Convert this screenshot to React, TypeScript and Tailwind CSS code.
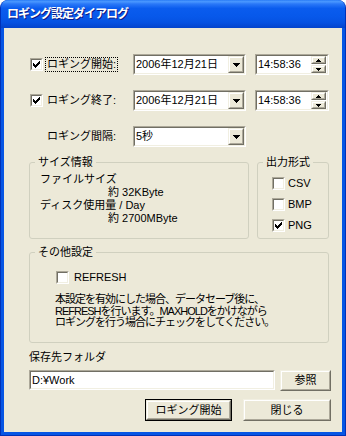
import React from "react";

type Run = [number, number, number];

function Px({ runs, w, h }: { runs: Run[]; w: number; h: number }) {
  return (
    <svg width={w} height={h} viewBox={`0 0 ${w} ${h}`} shapeRendering="crispEdges" className="block">
      {runs.map(([x, y, l], i) => (
        <rect key={i} x={x} y={y} width={l} height={1} fill="#000" />
      ))}
    </svg>
  );
}

const CHECK: Run[] = [
  [6, 0, 1],
  [5, 1, 2],
  [0, 2, 1],
  [4, 2, 3],
  [0, 3, 2],
  [3, 3, 3],
  [0, 4, 5],
  [1, 5, 3],
  [2, 6, 1],
];
const DOWN: Run[] = [
  [0, 0, 7],
  [1, 1, 5],
  [2, 2, 3],
  [3, 3, 1],
];
const SUP: Run[] = [
  [2, 0, 1],
  [1, 1, 3],
  [0, 2, 5],
];
const SDOWN: Run[] = [
  [0, 0, 5],
  [1, 1, 3],
  [2, 2, 1],
];

function Sunken({ className = "", children }: { className?: string; children?: React.ReactNode }) {
  return (
    <div className={`shrink-0 border border-t-[#ACA899] border-l-[#ACA899] border-b-white border-r-white ${className}`}>
      <div className="w-full h-full border border-t-[#716F64] border-l-[#716F64] border-b-[#F1EFE2] border-r-[#F1EFE2] bg-white flex items-center">
        {children}
      </div>
    </div>
  );
}

function Raised({ className = "", children }: { className?: string; children?: React.ReactNode }) {
  return (
    <div className={`shrink-0 border border-t-[#F1EFE2] border-l-[#F1EFE2] border-b-[#716F64] border-r-[#716F64] bg-[#ECE9D8] ${className}`}>
      <div className="w-full h-full border border-t-white border-l-white border-b-[#ACA899] border-r-[#ACA899] flex items-center justify-center">
        {children}
      </div>
    </div>
  );
}

function Check({ checked = false, className = "" }: { checked?: boolean; className?: string }) {
  return (
    <div className={`w-[13px] h-[13px] shrink-0 border border-t-[#ACA899] border-l-[#ACA899] border-b-white border-r-white ${className}`}>
      <div className="w-full h-full border border-t-[#716F64] border-l-[#716F64] border-b-[#F1EFE2] border-r-[#F1EFE2] bg-white flex items-center justify-center">
        {checked && <Px runs={CHECK} w={7} h={7} />}
      </div>
    </div>
  );
}

function Combo({ text }: { text: string }) {
  return (
    <Sunken className="w-[113px] h-[21px]">
      <span className="flex-1 pl-[1px] leading-[13px] whitespace-nowrap">{text}</span>
      <Raised className="w-[16px] h-[17px]">
        <Px runs={DOWN} w={7} h={4} />
      </Raised>
    </Sunken>
  );
}

function TimeBox() {
  return (
    <Sunken className="w-[74px] h-[21px] ml-[9px]">
      <span className="flex-1 pl-[1px] leading-[13px]">14:58:36</span>
      <div className="flex flex-col gap-[1px] pr-[1px]">
        <Raised className="w-[15px] h-[8px]">
          <Px runs={SUP} w={5} h={3} />
        </Raised>
        <Raised className="w-[15px] h-[8px]">
          <Px runs={SDOWN} w={5} h={3} />
        </Raised>
      </div>
    </Sunken>
  );
}

export default function App() {
  return (
    <div className="w-[346px] h-[436px] bg-white font-['Liberation_Sans','Noto_Sans_CJK_JP',sans-serif] text-[11px] text-black">
      <div className="w-full h-full flex flex-col rounded-t-[8px] overflow-hidden border-x border-b border-[#0031B8] bg-[#0655E4]">
        {/* title bar */}
        <div className="h-[28px] shrink-0 flex items-center pl-[6px] bg-[linear-gradient(to_bottom,#2a7cf6_0%,#4a98ff_6%,#2a78f8_14%,#0a5cee_30%,#0758ea_60%,#0652e2_80%,#0444cc_100%)]">
          <span className="text-white font-bold text-[12px] tracking-[-1px] leading-[14px] [text-shadow:1px_1px_#0A1883]">
            ロギング設定ダイアログ
          </span>
        </div>
        {/* frame */}
        <div className="flex-1 px-[3px] pb-[3px] flex">
          <div className="flex-1 bg-[#ECE9D8] pl-[25px] pt-[26px]">
            <div className="w-[302px] flex flex-col">
              {/* row 1 */}
              <div className="flex items-center h-[21px]">
                <div className="w-[104px] flex items-center">
                  <Check checked className="ml-[1px]" />
                  <span className="ml-[2px] border border-dotted border-black px-[1px] leading-[13px] whitespace-nowrap">
                    ロギング開始:
                  </span>
                </div>
                <Combo text="2006年12月21日" />
                <TimeBox />
              </div>
              {/* row 2 */}
              <div className="flex items-center h-[21px] mt-[15px]">
                <div className="w-[104px] flex items-center">
                  <Check checked className="ml-[1px]" />
                  <span className="ml-[4px] leading-[13px] whitespace-nowrap">ロギング終了:</span>
                </div>
                <Combo text="2006年12月21日" />
                <TimeBox />
              </div>
              {/* row 3 */}
              <div className="flex items-center h-[21px] mt-[15px]">
                <div className="w-[104px] pl-[18px] leading-[13px] whitespace-nowrap">ロギング間隔:</div>
                <Combo text="5秒" />
              </div>

              {/* groups row */}
              <div className="flex gap-[8px] mt-[9px]">
                <fieldset className="w-[220px] h-[83px] border border-[#D0D0BF] rounded-[3px] m-0 p-0">
                  <legend className="ml-[5px] px-[3px] leading-[13px]">サイズ情報</legend>
                  <div className="pl-[10px] pt-[4px] leading-[13px] whitespace-nowrap">
                    <div>ファイルサイズ</div>
                    <div className="pl-[68px]">約 32KByte</div>
                    <div>ディスク使用量 / Day</div>
                    <div className="pl-[68px]">約 2700MByte</div>
                  </div>
                </fieldset>
                <fieldset className="w-[72px] h-[83px] border border-[#D0D0BF] rounded-[3px] m-0 p-0">
                  <legend className="ml-[5px] px-[3px] leading-[13px]">出力形式</legend>
                  <div className="pl-[14px] pt-[4px]">
                    {[
                      ["CSV", false],
                      ["BMP", false],
                      ["PNG", true],
                    ].map(([t, c]) => (
                      <div key={t as string} className="h-[21px] flex items-center">
                        <Check checked={c as boolean} />
                        <span className="ml-[3px] leading-[13px]">{t as string}</span>
                      </div>
                    ))}
                  </div>
                </fieldset>
              </div>

              {/* other settings */}
              <fieldset className="w-[300px] h-[97px] mt-[7px] border border-[#D0D0BF] rounded-[3px] m-0 p-0">
                <legend className="ml-[5px] px-[3px] leading-[13px]">その他設定</legend>
                <div className="pt-[12px]">
                  <div className="h-[13px] flex items-center pl-[26px]">
                    <Check />
                    <span className="ml-[5px] leading-[13px]">REFRESH</span>
                  </div>
                  <div className="pl-[25px] mt-[10px] leading-[11.5px] tracking-[-1px] whitespace-nowrap">
                    <div>本設定を有効にした場合、データセーブ後に、</div>
                    <div>REFRESHを行います。MAXHOLDをかけながら</div>
                    <div>ロギングを行う場合にチェックをしてください。</div>
                  </div>
                </div>
              </fieldset>

              {/* save folder */}
              <div className="mt-[8px] leading-[13px]">保存先フォルダ</div>
              <div className="flex items-start mt-[6px] h-[21px]">
                <Sunken className="w-[246px] h-[20px]">
                  <span className="pl-[1px] leading-[13px]">D:¥Work</span>
                </Sunken>
                <Raised className="w-[51px] h-[21px] ml-[5px]">
                  <span className="leading-[13px]">参照</span>
                </Raised>
              </div>

              {/* buttons */}
              <div className="flex justify-end gap-[11px] mt-[8px]">
                <div className="w-[87px] h-[22px] border border-black">
                  <Raised className="w-full h-full">
                    <span className="leading-[13px]">ロギング開始</span>
                  </Raised>
                </div>
                <Raised className="w-[88px] h-[22px]">
                  <span className="leading-[13px]">閉じる</span>
                </Raised>
              </div>
            </div>
          </div>
        </div>
      </div>
    </div>
  );
}
